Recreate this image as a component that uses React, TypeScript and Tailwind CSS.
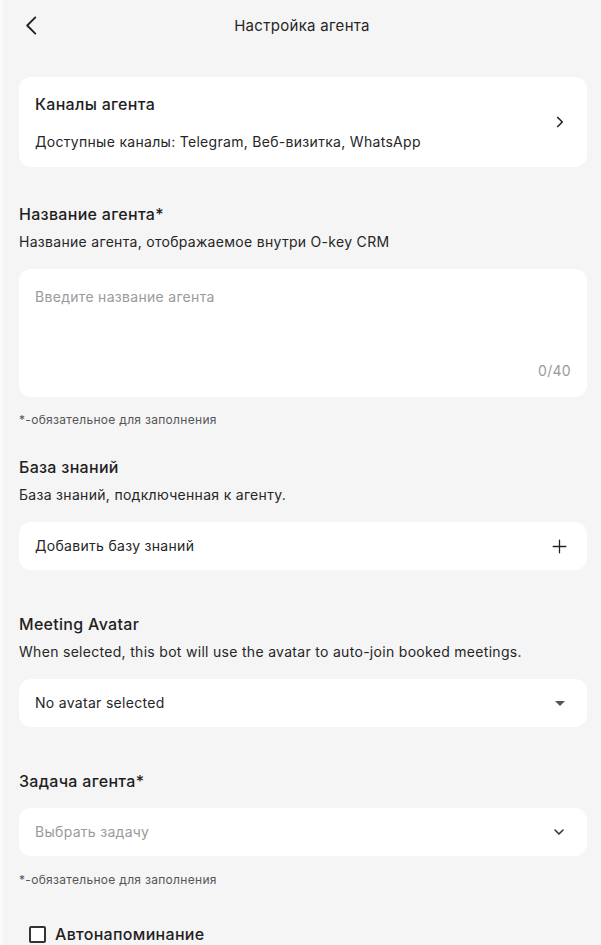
import React, { useState } from "react";

const Chevron: React.FC<{ d: string; className?: string; w?: number }> = ({
  d,
  className,
  w = 2,
}) => (
  <svg
    viewBox="0 0 24 24"
    fill="none"
    stroke="currentColor"
    strokeWidth={w}
    strokeLinecap="round"
    strokeLinejoin="round"
    className={className}
  >
    <path d={d} />
  </svg>
);

const SectionTitle: React.FC<{ children: React.ReactNode; className?: string }> = ({
  children,
  className = "",
}) => (
  <h2 className={`text-[16px] leading-[22px] font-medium text-[#1f1f1f] ${className}`}>
    {children}
  </h2>
);

const SectionDesc: React.FC<{ children: React.ReactNode }> = ({ children }) => (
  <p className="mt-[7px] text-[14px] leading-[20px] text-[#262626]">{children}</p>
);

const Note: React.FC = () => (
  <p className="text-[12px] leading-[16px] text-[#555]">*-обязательное для заполнения</p>
);

export default function App() {
  const [name, setName] = useState("");
  const [remind, setRemind] = useState(false);

  return (
    <div
      className="relative min-h-[945px] w-full overflow-hidden border-l-[3px] border-[#fbfbfb] bg-[#f5f5f5] tracking-[0.3px] text-[#1f1f1f]"
      style={{ fontFamily: "Inter, Roboto, 'Noto Sans', sans-serif" }}
    >
      {/* Header */}
      <header className="relative flex h-[50px] items-center justify-center">
        <button className="absolute left-[17px] top-[14px] text-[#1f1f1f]">
          <Chevron d="M16 3.5 7.5 12l8.5 8.5" className="h-[23px] w-[23px]" w={1.9} />
        </button>
        <h1 className="mt-[1px] text-[15px] leading-[20px] text-[#262626]">Настройка агента</h1>
      </header>

      <main className="pl-[16px] pr-[14px] pb-[20px]">
        {/* Channels */}
        <div className="mt-[27px] flex h-[90px] items-center justify-between rounded-[12px] bg-white pl-[16px] pr-[18px]">
          <div className="flex h-full flex-col pt-[16px]">
            <span className="text-[16px] leading-[22px] font-medium text-[#1f1f1f]">Каналы агента</span>
            <span className="mt-[17px] text-[14px] leading-[20px] text-[#262626]">
              Доступные каналы: Telegram, Веб-визитка, WhatsApp
            </span>
          </div>
          <Chevron d="m9 6 6 6-6 6" className="h-[18px] w-[18px] text-[#222]" w={2.2} />
        </div>

        {/* Agent name */}
        <SectionTitle className="mt-[36px]">Название агента*</SectionTitle>
        <SectionDesc>Название агента, отображаемое внутри O-key CRM</SectionDesc>
        <div className="mt-[17px] flex h-[128px] flex-col justify-between rounded-[12px] bg-white px-[16px] pb-[16px] pt-[18px]">
          <input
            value={name}
            maxLength={40}
            onChange={(e) => setName(e.target.value)}
            placeholder="Введите название агента"
            className="h-[20px] w-full bg-transparent text-[14px] leading-[20px] tracking-[0.3px] outline-none placeholder:text-[#9a9a9a]"
          />
          <span className="self-end text-[14px] leading-[20px] text-[#9a9a9a]">
            {name.length}/40
          </span>
        </div>
        <div className="mt-[15px]">
          <Note />
        </div>

        {/* Knowledge base */}
        <SectionTitle className="mt-[28px]">База знаний</SectionTitle>
        <SectionDesc>База знаний, подключенная к агенту.</SectionDesc>
        <button className="mt-[17px] flex h-[48px] w-full items-center justify-between rounded-[12px] bg-white pl-[16px] pr-[18px] tracking-[0.3px]">
          <span className="text-[14px] leading-[20px] text-[#262626]">Добавить базу знаний</span>
          <Chevron d="M12 4v16M4 12h16" className="h-[19px] w-[19px] text-[#222]" w={1.6} />
        </button>

        {/* Meeting avatar */}
        <SectionTitle className="mt-[43px]">Meeting Avatar</SectionTitle>
        <SectionDesc>When selected, this bot will use the avatar to auto-join booked meetings.</SectionDesc>
        <button className="mt-[17px] flex h-[48px] w-full items-center justify-between rounded-[12px] bg-white pl-[16px] pr-[22px] tracking-[0.3px]">
          <span className="text-[14px] leading-[20px] text-[#262626]">No avatar selected</span>
          <svg viewBox="0 0 10 5" className="h-[5px] w-[10px] text-[#555]" fill="currentColor">
            <path d="M0 0h10L5 5z" />
          </svg>
        </button>

        {/* Task */}
        <SectionTitle className="mt-[43px]">Задача агента*</SectionTitle>
        <button className="mt-[16px] flex h-[48px] w-full items-center justify-between rounded-[12px] bg-white pl-[16px] pr-[20px] tracking-[0.3px]">
          <span className="text-[14px] leading-[20px] text-[#9a9a9a]">Выбрать задачу</span>
          <Chevron d="m6 9 6 6 6-6" className="h-[16px] w-[16px] text-[#333]" w={2.4} />
        </button>
        <div className="mt-[16px]">
          <Note />
        </div>

        {/* Auto reminder */}
        <label className="mt-[34px] flex items-center gap-[9px] pl-[10px]">
          <input
            type="checkbox"
            checked={remind}
            onChange={(e) => setRemind(e.target.checked)}
            className="h-[17px] w-[17px] appearance-none rounded-[2px] border-[2px] border-[#333] bg-white"
          />
          <span className="text-[16px] leading-[24px] font-medium text-[#1f1f1f]">Автонапоминание</span>
        </label>
      </main>

      <div className="absolute bottom-0 left-0 right-0 h-[3px] bg-[#cfcfcf]" />
    </div>
  );
}
